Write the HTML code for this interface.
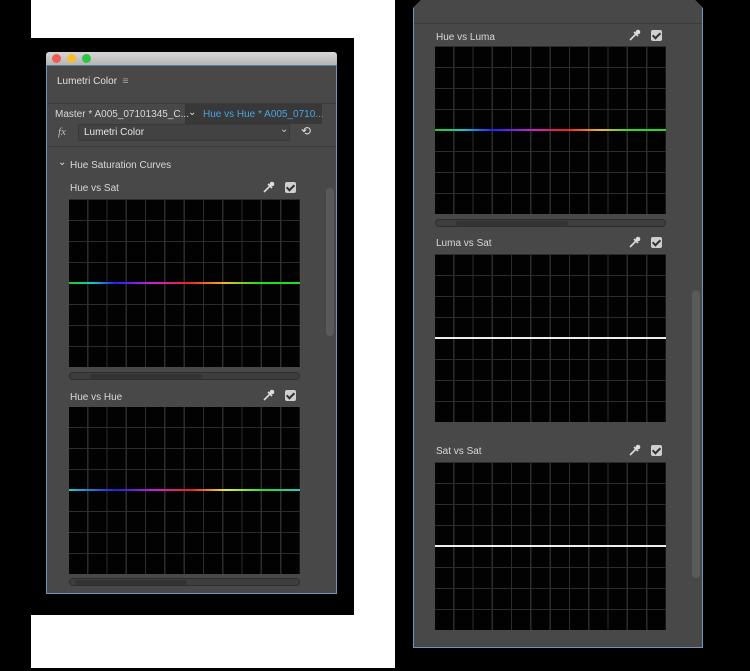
<!DOCTYPE html><html><head><style>
*{margin:0;padding:0;box-sizing:border-box}
body{width:750px;height:671px;background:#000;position:relative;overflow:hidden;font-family:"Liberation Sans",sans-serif;color:#cfcfcf;font-size:10px}
.a{position:absolute}
.g{position:absolute;background-color:#020202;background-image:repeating-linear-gradient(90deg,transparent 0 18px,#2c2c2c 18px 19.3px),repeating-linear-gradient(0deg,transparent 0 20px,#2c2c2c 20px 21px)}
.ln{position:absolute;left:0;right:0;height:2px}
.sb{position:absolute;height:8px;border-radius:4px;background:#3e3e3e;border:1px solid #2e2e2e}
.sb i{position:absolute;top:1px;height:5px;border-radius:3px;background:#333}
.ic{position:absolute;width:11px;height:11px;background:#cfcfcf;border-radius:2px}
.ic:after{content:"";position:absolute;left:3px;top:1px;width:3px;height:6px;border:solid #333;border-width:0 2px 2px 0;transform:rotate(45deg)}
.dp{position:absolute;width:13px;height:13px}
.t{position:absolute;font-size:10px;color:#d8d8d8}
</style></head><body>
<div class="a" style="left:31px;top:0;width:364px;height:668px;background:#fff"></div>
<div class="a" style="left:0;top:38px;width:354px;height:577px;background:#000"></div>
<div class="a" style="left:0;top:0;width:31px;height:671px;background:#000"></div>

<div class="a" style="left:46px;top:52px;width:291px;height:13px;background:linear-gradient(#d6d6d6,#b4b4b4);border-radius:3px 3px 0 0"></div>
<div class="a" style="left:52px;top:54px;width:9px;height:9px;border-radius:50%;background:#f25a55"></div>
<div class="a" style="left:67px;top:54px;width:9px;height:9px;border-radius:50%;background:#f6bd2e"></div>
<div class="a" style="left:82px;top:54px;width:9px;height:9px;border-radius:50%;background:#2ec540"></div>
<div class="a" style="left:46px;top:65px;width:291px;height:529px;background:#484848;border:1px solid #6a97bf;border-top-color:#5a7ea0"></div>
<div class="t" style="left:57px;top:76px;color:#e0e0e0">Lumetri Color &nbsp;<span style="color:#aaa">≡</span></div>
<div class="a" style="left:47px;top:103px;width:289px;height:1px;background:#3c3c3c"></div>
<div class="a" style="left:185px;top:104px;width:137px;height:20px;background:#383838"></div>
<div class="t" style="left:55px;top:109px">Master * A005_07101345_C...</div>
<div class="t" style="left:188px;top:107px;color:#ddd">⌄</div>
<div class="t" style="left:203px;top:109px;color:#4aa3e0">Hue vs Hue * A005_0710...</div>
<div class="t" style="left:58px;top:126px;font-style:italic;color:#bbb;font-family:'Liberation Serif',serif;font-size:11px">fx</div>
<div class="a" style="left:78px;top:124px;width:212px;height:17px;background:#424242;border:1px solid #3a3a3a;border-radius:2px"></div>
<div class="t" style="left:84px;top:127px;color:#e6e6e6">Lumetri Color</div>
<div class="t" style="left:280px;top:124px;color:#ccc">⌄</div>
<div class="t" style="left:301px;top:124px;color:#ddd;font-size:12px">⟲</div>
<div class="a" style="left:47px;top:146px;width:289px;height:1px;background:#3c3c3c"></div>
<div class="t" style="left:58px;top:157px;color:#ddd">⌄</div>
<div class="t" style="left:70px;top:160px">Hue Saturation Curves</div>
<div class="a" style="left:326px;top:188px;width:8px;height:148px;background:#5a5a5a;border-radius:4px"></div>

<div class="t" style="left:70px;top:183px">Hue vs Sat</div>
<svg class="dp" style="left:262px;top:181px" viewBox="0 0 13 13"><path d="M2 11 L8 5 M6 3 L10 7" stroke="#ddd" stroke-width="1.6" fill="none"/><circle cx="10" cy="3" r="2.3" fill="#ddd"/></svg><div class="ic" style="left:285px;top:182px"></div>
<div class="g" style="left:69px;top:199px;width:231px;height:168px"><div class="ln" style="top:83px;background:linear-gradient(90deg,#2c2 0%,#1cc 10%,#22f 20%,#c2c 37%,#e22 52%,#eb2 68%,#2d2 82%,#2d2 100%)"></div></div>
<div class="sb" style="left:69px;top:372px;width:231px"><i style="left:20px;width:112px"></i></div>

<div class="t" style="left:70px;top:392px">Hue vs Hue</div>
<svg class="dp" style="left:262px;top:389px" viewBox="0 0 13 13"><path d="M2 11 L8 5 M6 3 L10 7" stroke="#ddd" stroke-width="1.6" fill="none"/><circle cx="10" cy="3" r="2.3" fill="#ddd"/></svg><div class="ic" style="left:285px;top:390px"></div>
<div class="g" style="left:69px;top:407px;width:231px;height:167px"><div class="ln" style="top:82px;background:linear-gradient(90deg,#2cc 0%,#22d 20%,#c2c 38%,#e22 53%,#ee2 68%,#2d3 85%,#2cc 100%)"></div></div>
<div class="sb" style="left:69px;top:578px;width:231px"><i style="left:5px;width:112px"></i></div>

<div class="a" style="left:413px;top:0;width:290px;height:648px;background:#6a97bf;clip-path:polygon(0 8px,8px 0,282px 0,290px 8px,290px 100%,0 100%)"></div>
<div class="a" style="left:414px;top:0;width:288px;height:647px;background:#484848;clip-path:polygon(0 7px,7px 0,281px 0,288px 7px,288px 100%,0 100%)"></div>
<div class="a" style="left:414px;top:23px;width:288px;height:1px;background:#3c3c3c"></div>
<div class="a" style="left:692px;top:290px;width:8px;height:288px;background:#5a5a5a;border-radius:4px"></div>

<div class="t" style="left:436px;top:32px">Hue vs Luma</div>
<svg class="dp" style="left:628px;top:29px" viewBox="0 0 13 13"><path d="M2 11 L8 5 M6 3 L10 7" stroke="#ddd" stroke-width="1.6" fill="none"/><circle cx="10" cy="3" r="2.3" fill="#ddd"/></svg><div class="ic" style="left:651px;top:30px"></div>
<div class="g" style="left:435px;top:46px;width:231px;height:168px"><div class="ln" style="top:83px;background:linear-gradient(90deg,#2c2 0%,#1cc 12%,#22f 25%,#c2c 42%,#e22 57%,#eb2 72%,#2d2 86%,#2d2 100%)"></div></div>
<div class="sb" style="left:435px;top:219px;width:231px"><i style="left:20px;width:112px"></i></div>

<div class="t" style="left:436px;top:238px">Luma vs Sat</div>
<svg class="dp" style="left:628px;top:236px" viewBox="0 0 13 13"><path d="M2 11 L8 5 M6 3 L10 7" stroke="#ddd" stroke-width="1.6" fill="none"/><circle cx="10" cy="3" r="2.3" fill="#ddd"/></svg><div class="ic" style="left:651px;top:237px"></div>
<div class="g" style="left:435px;top:254px;width:231px;height:168px"><div class="ln" style="top:83px;background:#eee"></div></div>

<div class="t" style="left:436px;top:446px">Sat vs Sat</div>
<svg class="dp" style="left:628px;top:444px" viewBox="0 0 13 13"><path d="M2 11 L8 5 M6 3 L10 7" stroke="#ddd" stroke-width="1.6" fill="none"/><circle cx="10" cy="3" r="2.3" fill="#ddd"/></svg><div class="ic" style="left:651px;top:445px"></div>
<div class="g" style="left:435px;top:462px;width:231px;height:168px"><div class="ln" style="top:83px;background:#eee"></div></div>
</body></html>
